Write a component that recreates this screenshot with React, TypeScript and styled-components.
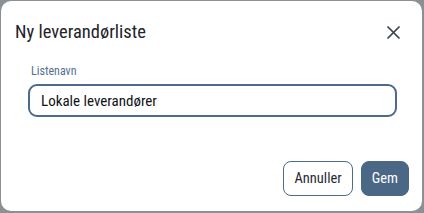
import React from "react";
import styled, { createGlobalStyle } from "styled-components";

const GlobalStyle = createGlobalStyle`
  html, body {
    margin: 0;
    padding: 0;
    background: #8b9095;
  }
  body {
    font-family: Roboto, "Noto Sans", sans-serif;
    font-stretch: condensed;
  }
`;

const Backdrop = styled.div`
  width: 424px;
  height: 213px;
  padding: 1px 2px 2px 1px;
  box-sizing: border-box;
`;

const Dialog = styled.div`
  height: 100%;
  background: #ffffff;
  border-radius: 10px;
  display: flex;
  flex-direction: column;
  box-sizing: border-box;
`;

const Header = styled.div`
  display: flex;
  align-items: center;
  justify-content: space-between;
  padding: 20px 20px 0 14px;
  height: 42px;
  box-sizing: border-box;
`;

const Title = styled.h2`
  margin: 0;
  font-size: 18.5px;
  font-weight: 400;
  color: #1c2329;
`;

const CloseButton = styled.button`
  border: none;
  background: none;
  padding: 0;
  width: 18px;
  height: 18px;
  display: flex;
  align-items: center;
  justify-content: center;
  cursor: pointer;
`;

const Body = styled.div`
  padding: 21px 25px 0 27px;
  display: flex;
  flex-direction: column;
  gap: 6px;
`;

const Label = styled.label`
  font-size: 12px;
  color: #52708f;
  padding-left: 3px;
`;

const Input = styled.input`
  height: 33px;
  box-sizing: border-box;
  border: 2px solid #4c6a89;
  border-radius: 9px;
  padding: 0 11px;
  font-family: inherit;
  font-stretch: condensed;
  font-size: 15px;
  color: #0f1216;
  outline: none;
`;

const Footer = styled.div`
  margin-top: auto;
  display: flex;
  justify-content: flex-end;
  gap: 8px;
  padding: 0 13px 15px 0;
`;

const Button = styled.button<{ primary?: boolean }>`
  height: 35px;
  box-sizing: border-box;
  padding: 0 10px;
  border-radius: 8px;
  font-family: inherit;
  font-stretch: condensed;
  font-size: 14.5px;
  border: 1px solid ${(p) => (p.primary ? "#4a6886" : "#4d6b89")};
  background: ${(p) => (p.primary ? "#4a6886" : "#ffffff")};
  color: ${(p) => (p.primary ? "#ffffff" : "#1f2a36")};
  cursor: pointer;
`;

const App = () => (
  <>
    <GlobalStyle />
    <Backdrop>
      <Dialog>
        <Header>
          <Title>Ny leverandørliste</Title>
          <CloseButton aria-label="Luk">
            <svg width="13" height="13" viewBox="0 0 13 13">
              <path
                d="M1 1L12 12M12 1L1 12"
                stroke="#3a414a"
                strokeWidth="1.7"
                strokeLinecap="round"
              />
            </svg>
          </CloseButton>
        </Header>
        <Body>
          <Label>Listenavn</Label>
          <Input defaultValue="Lokale leverandører" />
        </Body>
        <Footer>
          <Button>Annuller</Button>
          <Button primary>Gem</Button>
        </Footer>
      </Dialog>
    </Backdrop>
  </>
);

export default App;
